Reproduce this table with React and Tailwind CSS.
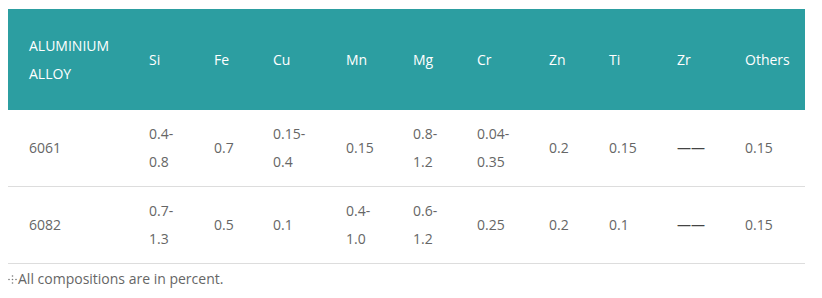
import React from 'react';

const cols = ['ALUMINIUM ALLOY', 'Si', 'Fe', 'Cu', 'Mn', 'Mg', 'Cr', 'Zn', 'Ti', 'Zr', 'Others'];

const rows = [
  ['6061', '0.4-\n0.8', '0.7', '0.15-\n0.4', '0.15', '0.8-\n1.2', '0.04-\n0.35', '0.2', '0.15', '——', '0.15'],
  ['6082', '0.7-\n1.3', '0.5', '0.1', '0.4-\n1.0', '0.6-\n1.2', '0.25', '0.2', '0.1', '——', '0.15'],
];

const grid = 'grid grid-cols-[120px_65px_59px_73px_67px_64px_72px_60px_68px_68px_81px]';

// small dotted cross before the note
function DotCross() {
  return (
    <svg width="9" height="11" viewBox="0 0 9 11" className="inline-block align-[-1px] mr-[1px]" fill="#777777">
      <circle cx="4.5" cy="2" r="0.8" />
      <circle cx="4.5" cy="5.5" r="0.8" />
      <circle cx="4.5" cy="9" r="0.8" />
      <circle cx="1" cy="5.5" r="0.8" />
      <circle cx="8" cy="5.5" r="0.8" />
    </svg>
  );
}

export default function App() {
  return (
    <div className="bg-white w-[822px] h-[298px] pt-[9px] px-2" style={{ fontFamily: '"Open Sans", sans-serif' }}>
      <div className="w-[797px]">
        <div className={`${grid} bg-[#2c9ea1] text-white text-[14px] leading-[28px] h-[101px] items-center`}>
          {cols.map((c, i) => (
            <div key={i} className={`pl-[21px] ${i === 0 ? 'pr-2' : ''}`}>
              {i === 0 ? (
                <>
                  ALUMINIUM
                  <br />
                  ALLOY
                </>
              ) : (
                c
              )}
            </div>
          ))}
        </div>
        {rows.map((r, ri) => (
          <div key={ri} className={`${grid} h-[77px] items-center border-b border-[#dddddd] text-[14px] leading-[28px] text-[#666666]`}>
            {r.map((v, i) => (
              <div key={i} className="pl-[21px] whitespace-pre-line">
                {v === '——' ? <span className="text-[#444444]">{v}</span> : v}
              </div>
            ))}
          </div>
        ))}
        <div className="text-[14px] leading-[28px] text-[#666666] mt-[1px]">
          <DotCross />
          All compositions are in percent.
        </div>
      </div>
    </div>
  );
}
